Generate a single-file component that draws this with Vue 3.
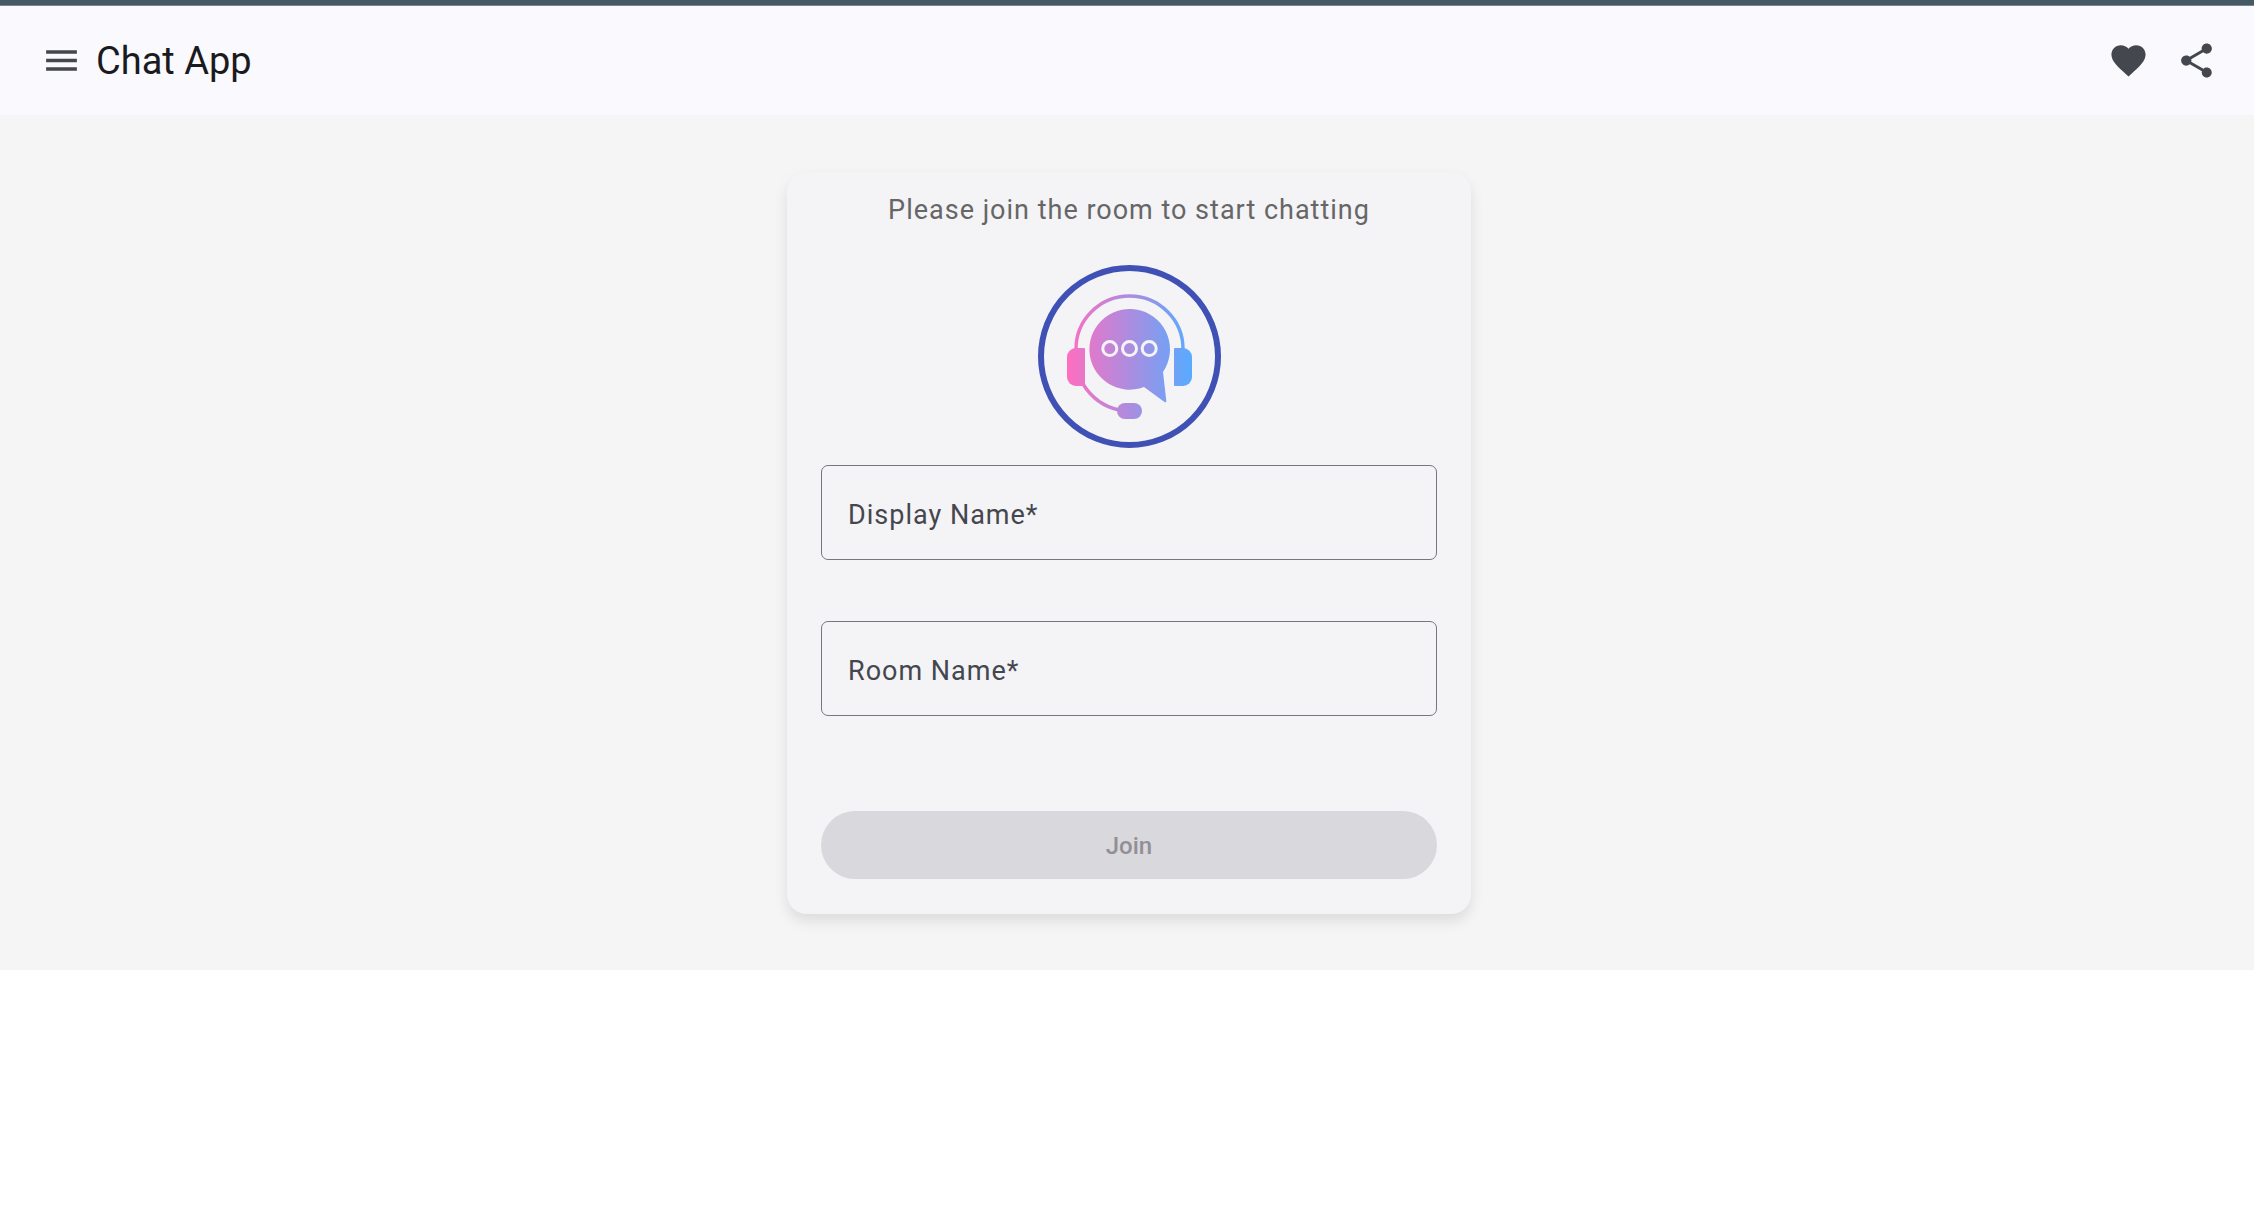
<script setup>
import { ref, computed } from 'vue'

const displayName = ref('')
const roomName = ref('')
const canJoin = computed(() => displayName.value.trim() !== '' && roomName.value.trim() !== '')
</script>

<template>
  <div class="app">
    <div class="strip"></div>
    <header class="toolbar">
      <button class="icon-button" type="button" aria-label="Menu">
        <svg viewBox="0 0 24 24"><path d="M3 18h18v-2H3v2zm0-5h18v-2H3v2zm0-7v2h18V6H3z" /></svg>
      </button>
      <h1 class="title">Chat App</h1>
      <span class="spacer"></span>
      <button class="icon-button" type="button" aria-label="Favorite">
        <svg viewBox="0 0 24 24">
          <path d="M12 21.35l-1.45-1.32C5.4 15.36 2 12.28 2 8.5 2 5.42 4.42 3 7.5 3c1.74 0 3.41.81 4.5 2.09C13.09 3.81 14.76 3 16.5 3 19.58 3 22 5.42 22 8.5c0 3.78-3.4 6.86-8.55 11.54L12 21.35z" />
        </svg>
      </button>
      <button class="icon-button" type="button" aria-label="Share">
        <svg viewBox="0 0 24 24">
          <path d="M18 16.08c-.76 0-1.44.3-1.96.77L8.91 12.7c.05-.23.09-.46.09-.7s-.04-.47-.09-.7l7.05-4.11c.54.5 1.25.81 2.04.81 1.66 0 3-1.34 3-3s-1.34-3-3-3-3 1.34-3 3c0 .24.04.47.09.7L8.04 9.81C7.5 9.31 6.79 9 6 9c-1.66 0-3 1.34-3 3s1.34 3 3 3c.79 0 1.5-.31 2.04-.81l7.12 4.16c-.05.21-.08.43-.08.65 0 1.61 1.31 2.92 2.92 2.92 1.61 0 2.92-1.31 2.92-2.92s-1.31-2.92-2.92-2.92z" />
        </svg>
      </button>
    </header>

    <main class="content">
      <form class="card" @submit.prevent>
        <p class="subtitle">Please join the room to start chatting</p>
        <svg class="logo" viewBox="18 15 183 183" aria-hidden="true">
          <defs>
            <linearGradient id="chat-gradient" gradientUnits="userSpaceOnUse" x1="47" y1="0" x2="172" y2="0">
              <stop offset="0" stop-color="#ff6ec0" />
              <stop offset="1" stop-color="#58abff" />
            </linearGradient>
          </defs>
          <circle cx="109.5" cy="106.5" r="88.5" fill="none" stroke="#3f51b5" stroke-width="6" />
          <g fill="none" stroke="url(#chat-gradient)" stroke-width="3.4">
            <path d="M56 99a53.5 53 0 0 1 107 0" />
            <path d="M63 134Q76 155 99 160" />
          </g>
          <g fill="url(#chat-gradient)">
            <path d="M56 98H64a1 1 0 0 1 1 1V135a1 1 0 0 1-1 1H56a9 9 0 0 1-9-9V107a9 9 0 0 1 9-9z" />
            <path d="M163 98H155a1 1 0 0 0-1 1V135a1 1 0 0 0 1 1H163a9 9 0 0 0 9-9V107a9 9 0 0 0-9-9z" />
            <path d="M124 137A40.300 40.300 0 1 1 143 122L146.300 151Q146.300 153 144.500 152z" />
            <rect x="97" y="153" width="25" height="16" rx="8" />
          </g>
          <g fill="none" stroke="#f4f3f6" stroke-width="3">
            <circle cx="89.800" cy="98.600" r="7" />
            <circle cx="109.500" cy="98.600" r="7" />
            <circle cx="129.200" cy="98.600" r="7" />
          </g>
        </svg>

        <div class="field">
          <input id="display-name" v-model="displayName" type="text" required />
          <label for="display-name" :class="{ filled: displayName }">Display Name*</label>
        </div>
        <div class="field">
          <input id="room-name" v-model="roomName" type="text" required />
          <label for="room-name" :class="{ filled: roomName }">Room Name*</label>
        </div>
        <button class="join" type="submit" :disabled="!canJoin">Join</button>
      </form>
    </main>
  </div>
</template>

<style>
body {
  margin: 0;
  background: #fff;
}
</style>

<style scoped>
.app {
  font-family: Roboto, "Liberation Sans", sans-serif;
}

.strip {
  height: 5px;
  background: #455a64;
  border-bottom: 1px solid #77858e;
}

.toolbar {
  display: flex;
  align-items: center;
  box-sizing: border-box;
  height: 109px;
  padding: 0 24px 0 27px;
  background: #faf9fd;
}

.icon-button {
  display: grid;
  place-items: center;
  width: 68px;
  height: 68px;
  padding: 0;
  border: 0;
  border-radius: 50%;
  background: none;
  color: #44474e;
  cursor: pointer;
}

.icon-button svg {
  width: 41px;
  height: 41px;
  fill: currentColor;
}

.title {
  margin: 0 0 0 1px;
  font-size: 38px;
  font-weight: 400;
  line-height: 48px;
  color: #1a1b1f;
}

.spacer {
  flex: 1;
}

.content {
  display: flex;
  justify-content: center;
  padding: 57px 24px 56px 28px;
  background: #f5f5f5;
}

.card {
  display: flex;
  flex-direction: column;
  box-sizing: border-box;
  width: 100%;
  max-width: 684px;
  padding: 17px 34px 35px;
  border-radius: 20px;
  background: #f4f3f6;
  box-shadow: 0 7px 14px rgba(0, 0, 0, 0.1);
}

.subtitle {
  margin: 0 0 34px;
  font-size: 27px;
  line-height: 42px;
  letter-spacing: 1px;
  text-align: center;
  color: #666;
}

.logo {
  align-self: center;
  width: 183px;
  height: 183px;
  margin-bottom: 17px;
}

.field {
  display: grid;
  align-items: center;
  margin-bottom: 61px;
}

.field input,
.field label {
  grid-area: 1 / 1;
  font-size: 27px;
  line-height: 40px;
  letter-spacing: 1px;
}

.field input {
  box-sizing: border-box;
  width: 100%;
  min-width: 0;
  height: 95px;
  padding: 0 27px;
  border: 1px solid #74777f;
  border-radius: 7px;
  background: transparent;
  font-family: inherit;
  color: #1a1b1f;
}

.field label {
  padding: 4px 27px 0;
  color: #44474e;
  pointer-events: none;
}

.field label.filled {
  visibility: hidden;
}

.join {
  height: 68px;
  margin-top: 34px;
  padding: 2px 27px 0;
  border: 0;
  border-radius: 34px;
  background: #005cbb;
  color: #fff;
  font-family: inherit;
  font-size: 24px;
  font-weight: 500;
  line-height: 34px;
}

.join:disabled {
  background: #d9d8dd;
  color: #919095;
}
</style>
